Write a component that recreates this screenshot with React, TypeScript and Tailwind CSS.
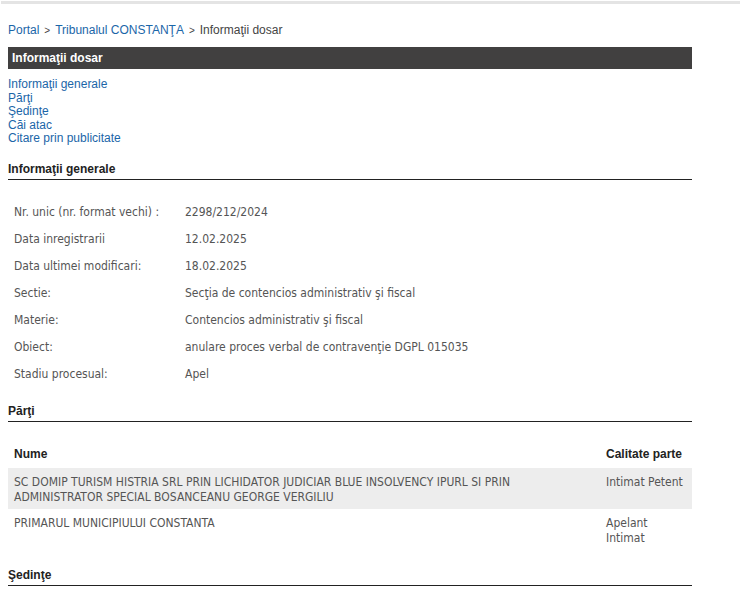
const info: [string, string][] = [
  ['Nr. unic (nr. format vechi) :', '2298/212/2024'],
  ['Data inregistrarii', '12.02.2025'],
  ['Data ultimei modificari:', '18.02.2025'],
  ['Sectie:', 'Secţia de contencios administrativ şi fiscal'],
  ['Materie:', 'Contencios administrativ şi fiscal'],
  ['Obiect:', 'anulare proces verbal de contravenţie DGPL 015035'],
  ['Stadiu procesual:', 'Apel'],
];

const parti = [
  {
    nume: 'SC DOMIP TURISM HISTRIA SRL PRIN LICHIDATOR JUDICIAR BLUE INSOLVENCY IPURL SI PRIN ADMINISTRATOR SPECIAL BOSANCEANU GEORGE VERGILIU',
    calitate: 'Intimat Petent',
  },
  { nume: 'PRIMARUL MUNICIPIULUI CONSTANTA', calitate: 'Apelant Intimat' },
];

const links = ['Informaţii generale', 'Părţi', 'Şedinţe', 'Căi atac', 'Citare prin publicitate'];

function SectionTitle({ children, className = '' }: { children: string; className?: string }) {
  return (
    <div className={`border-b border-[#222] pb-[2px] text-[12px] font-bold leading-[15px] text-[#222] ${className}`}>
      {children}
    </div>
  );
}

export default function App() {
  return (
    <div className="min-h-[596px] bg-white font-['Liberation_Sans',Arial,sans-serif]">
      <div className="mx-[1px] mt-[1px] h-[3px] bg-[#e4e4e4]" />
      <div className="ml-[8px] w-[684px]">
        <div className="mt-[19px] text-[12px] leading-[14px] text-[#444]">
          <a className="text-[#1b66a8]">Portal</a>
          <span className="mx-[5px] text-[10px]">&gt;</span>
          <a className="text-[#1b66a8]">Tribunalul CONSTANŢA</a>
          <span className="mx-[5px] text-[10px]">&gt;</span>
          <span>Informaţii dosar</span>
        </div>

        <div className="mt-[9px] flex h-[22px] items-center bg-[#414040] px-[4px] text-[12px] font-bold text-white">
          Informaţii dosar
        </div>

        <ul className="mt-[9px] text-[12px] leading-[13.5px] text-[#1b66a8]">
          {links.map((l) => (
            <li key={l}>
              <a>{l}</a>
            </li>
          ))}
        </ul>

        <SectionTitle className="mt-[16px]">Informaţii generale</SectionTitle>

        <table className="mt-[19px] font-['DejaVu_Sans_Condensed','DejaVu_Sans',Tahoma,sans-serif] text-[12px] text-[#555]">
          <tbody>
            {info.map(([k, v]) => (
              <tr key={k} className="h-[27px]">
                <td className="w-[177px] pl-[6px] align-middle">{k}</td>
                <td className="align-middle">{v}</td>
              </tr>
            ))}
          </tbody>
        </table>

        <SectionTitle className="mt-[16px]">Părţi</SectionTitle>

        <table className="mt-[23px] w-full">
          <thead>
            <tr className="text-left text-[12px] font-bold text-[#222]">
              <th className="px-[6px] pb-[5px]">Nume</th>
              <th className="w-[86px] pb-[5px] pl-0">Calitate parte</th>
            </tr>
          </thead>
          <tbody className="font-['DejaVu_Sans_Condensed','DejaVu_Sans',Tahoma,sans-serif] text-[12px] leading-[15px] text-[#555]">
            {parti.map((p, i) => (
              <tr key={p.nume} className={i % 2 === 0 ? 'bg-[#ededed]' : ''}>
                <td className="px-[6px] pb-[4px] pt-[7px] align-top">{p.nume}</td>
                <td className="pb-[4px] pr-[4px] pt-[7px] align-top">{p.calitate}</td>
              </tr>
            ))}
          </tbody>
        </table>

        <SectionTitle className="mt-[18px]">Şedinţe</SectionTitle>
      </div>
    </div>
  );
}
